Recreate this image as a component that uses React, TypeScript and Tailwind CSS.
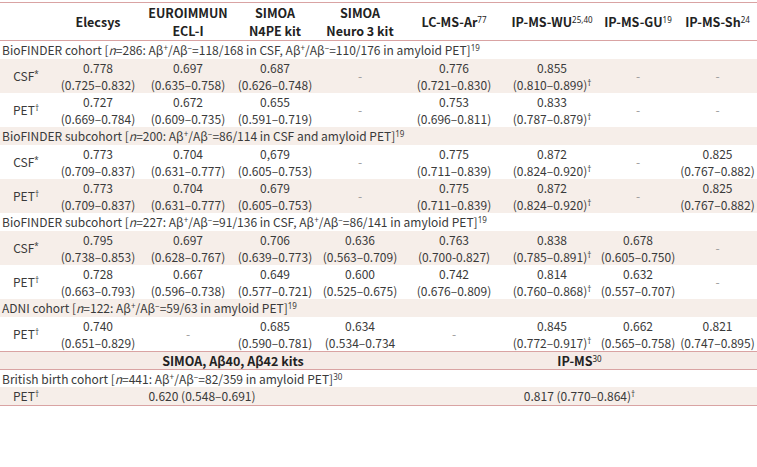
import type { ReactNode } from 'react'

type Val = [string, string, boolean?] | '-'

type Row = { label: 'CSF' | 'PET'; vals: Val[] }

type Group = { title: ReactNode; rows: Row[] }

const font = { fontFamily: '"Noto Sans CJK KR", "Noto Sans", sans-serif' }

// CJK fonts draw † and ± full width, so marks get a latin family
function Sup({ children, bold = false }: { children: ReactNode; bold?: boolean }) {
  return (
    <sup className={`font-['Noto_Sans',sans-serif] text-[8px] ${bold ? '' : 'font-normal'}`}>{children}</sup>
  )
}

const AB = () => (
  <>
    Aβ<Sup>+</Sup>/Aβ<Sup>−</Sup>
  </>
)

const groups: Group[] = [
  {
    title: (
      <>
        BioFINDER cohort [<i>n</i>=286: <AB />=118/168 in CSF, <AB />=110/176 in amyloid PET]<Sup>19</Sup>
      </>
    ),
    rows: [
      {
        label: 'CSF',
        vals: [
          ['0.778', '(0.725–0.832)'],
          ['0.697', '(0.635–0.758)'],
          ['0.687', '(0.626–0.748)'],
          '-',
          ['0.776', '(0.721–0.830)'],
          ['0.855', '(0.810–0.899)', true],
          '-',
          '-',
        ],
      },
      {
        label: 'PET',
        vals: [
          ['0.727', '(0.669–0.784)'],
          ['0.672', '(0.609–0.735)'],
          ['0.655', '(0.591–0.719)'],
          '-',
          ['0.753', '(0.696–0.811)'],
          ['0.833', '(0.787–0.879)', true],
          '-',
          '-',
        ],
      },
    ],
  },
  {
    title: (
      <>
        BioFINDER subcohort [<i>n</i>=200: <AB />=86/114 in CSF and amyloid PET]<Sup>19</Sup>
      </>
    ),
    rows: [
      {
        label: 'CSF',
        vals: [
          ['0.773', '(0.709–0.837)'],
          ['0.704', '(0.631–0.777)'],
          ['0,679', '(0.605–0.753)'],
          '-',
          ['0.775', '(0.711–0.839)'],
          ['0.872', '(0.824–0.920)', true],
          '-',
          ['0.825', '(0.767–0.882)'],
        ],
      },
      {
        label: 'PET',
        vals: [
          ['0.773', '(0.709–0.837)'],
          ['0.704', '(0.631–0.777)'],
          ['0.679', '(0.605–0.753)'],
          '-',
          ['0.775', '(0.711–0.839)'],
          ['0.872', '(0.824–0.920)', true],
          '-',
          ['0.825', '(0.767–0.882)'],
        ],
      },
    ],
  },
  {
    title: (
      <>
        BioFINDER subcohort [<i>n</i>=227: <AB />=91/136 in CSF, <AB />=86/141 in amyloid PET]<Sup>19</Sup>
      </>
    ),
    rows: [
      {
        label: 'CSF',
        vals: [
          ['0.795', '(0.738–0.853)'],
          ['0.697', '(0.628–0.767)'],
          ['0.706', '(0.639–0.773)'],
          ['0.636', '(0.563–0.709)'],
          ['0.763', '(0.700-0.827)'],
          ['0.838', '(0.785–0.891)', true],
          ['0.678', '(0.605–0.750)'],
          '-',
        ],
      },
      {
        label: 'PET',
        vals: [
          ['0.728', '(0.663–0.793)'],
          ['0.667', '(0.596–0.738)'],
          ['0.649', '(0.577–0.721)'],
          ['0.600', '(0.525–0.675)'],
          ['0.742', '(0.676–0.809)'],
          ['0.814', '(0.760–0.868)', true],
          ['0.632', '(0.557–0.707)'],
          '-',
        ],
      },
    ],
  },
  {
    title: (
      <>
        ADNI cohort [<i>n</i>=122: <AB />=59/63 in amyloid PET]<Sup>19</Sup>
      </>
    ),
    rows: [
      {
        label: 'PET',
        vals: [
          ['0.740', '(0.651–0.829)'],
          '-',
          ['0.685', '(0.590–0.781)'],
          ['0.634', '(0.534–0.734'],
          '-',
          ['0.845', '(0.772–0.917)', true],
          ['0.662', '(0.565–0.758)'],
          ['0.821', '(0.747–0.895)'],
        ],
      },
    ],
  },
]

function Label({ kind }: { kind: 'CSF' | 'PET' }) {
  return (
    <>
      {kind}
      <Sup>{kind === 'CSF' ? '*' : '†'}</Sup>
    </>
  )
}

function ValueCell({ v }: { v: Val }) {
  if (v === '-') {
    return <td className="text-center align-middle text-[#999]">-</td>
  }
  return (
    <td className="text-center align-middle leading-[17px]">
      <div>{v[0]}</div>
      <div className="whitespace-nowrap">
        {v[1]}
        {v[2] && <Sup>†</Sup>}
      </div>
    </td>
  )
}

export default function App() {
  let stripe = 0
  const bg = () => (stripe++ % 2 === 1 ? 'bg-[#f6eee9]' : 'bg-white')

  return (
    <div className="h-[467px] w-[757px] bg-white pt-[2px] text-[12px] text-[#3a3a3a]" style={font}>
      <table className="w-full table-fixed border-collapse">
        <colgroup>
          <col className="w-[52px]" />
          <col className="w-[92px]" />
          <col className="w-[88px]" />
          <col className="w-[86px]" />
          <col className="w-[84px]" />
          <col className="w-[104px]" />
          <col className="w-[92px]" />
          <col className="w-[80px]" />
          <col className="w-[79px]" />
        </colgroup>
        <thead>
          <tr className="h-[38px] border-y border-[#d9a3a3] text-[12.5px] font-bold leading-[18px] text-[#222]">
            <th />
            <th className="text-center">Elecsys</th>
            <th className="text-center">
              EUROIMMUN
              <br />
              ECL-I
            </th>
            <th className="text-center">
              SIMOA
              <br />
              N4PE kit
            </th>
            <th className="text-center">
              SIMOA
              <br />
              Neuro 3 kit
            </th>
            <th className="whitespace-nowrap text-center">
              LC-MS-Ar<Sup>77</Sup>
            </th>
            <th className="whitespace-nowrap text-center">
              IP-MS-WU<Sup>25,40</Sup>
            </th>
            <th className="whitespace-nowrap text-center">
              IP-MS-GU<Sup>19</Sup>
            </th>
            <th className="whitespace-nowrap text-center">
              IP-MS-Sh<Sup>24</Sup>
            </th>
          </tr>
        </thead>
        <tbody>
          {groups.map((g, gi) => {
            const gBg = bg()
            return [
              <tr key={`g${gi}`} className={`h-[18px] ${gBg}`}>
                <td colSpan={9} className="whitespace-nowrap pl-[2px] leading-[17px]">
                  {g.title}
                </td>
              </tr>,
              ...g.rows.map((r, ri) => (
                <tr
                  key={`r${gi}-${ri}`}
                  className={`h-[34px] ${bg()} ${gi === groups.length - 1 ? 'border-b border-[#d9a3a3]' : ''}`}
                >
                  <td className="text-center align-middle">
                    <Label kind={r.label} />
                  </td>
                  {r.vals.map((v, vi) => (
                    <ValueCell key={vi} v={v} />
                  ))}
                </tr>
              )),
            ]
          })}
          <tr className="h-[18px] border-b border-[#d9a3a3] bg-[#f5ebe7] text-[12.5px] font-bold leading-[17px] text-[#222]">
            <td />
            <td colSpan={4} className="pl-[12px] text-center">
              SIMOA, Aβ40, Aβ42 kits
            </td>
            <td colSpan={4} className="text-center">
              IP-MS<Sup>30</Sup>
            </td>
          </tr>
          <tr className="h-[18px] bg-white">
            <td colSpan={9} className="whitespace-nowrap pl-[2px] leading-[17px]">
              British birth cohort [<i>n</i>=441: <AB />=82/359 in amyloid PET]<Sup>30</Sup>
            </td>
          </tr>
          <tr className="h-[18px] border-b border-[#d9a3a3] bg-[#f6eee9] leading-[17px]">
            <td className="text-center">
              <Label kind="PET" />
            </td>
            <td colSpan={4} className="pr-[50px] text-center">
              0.620 (0.548–0.691)
            </td>
            <td colSpan={4} className="text-center">
              0.817 (0.770–0.864)<Sup>†</Sup>
            </td>
          </tr>
        </tbody>
      </table>
    </div>
  )
}
